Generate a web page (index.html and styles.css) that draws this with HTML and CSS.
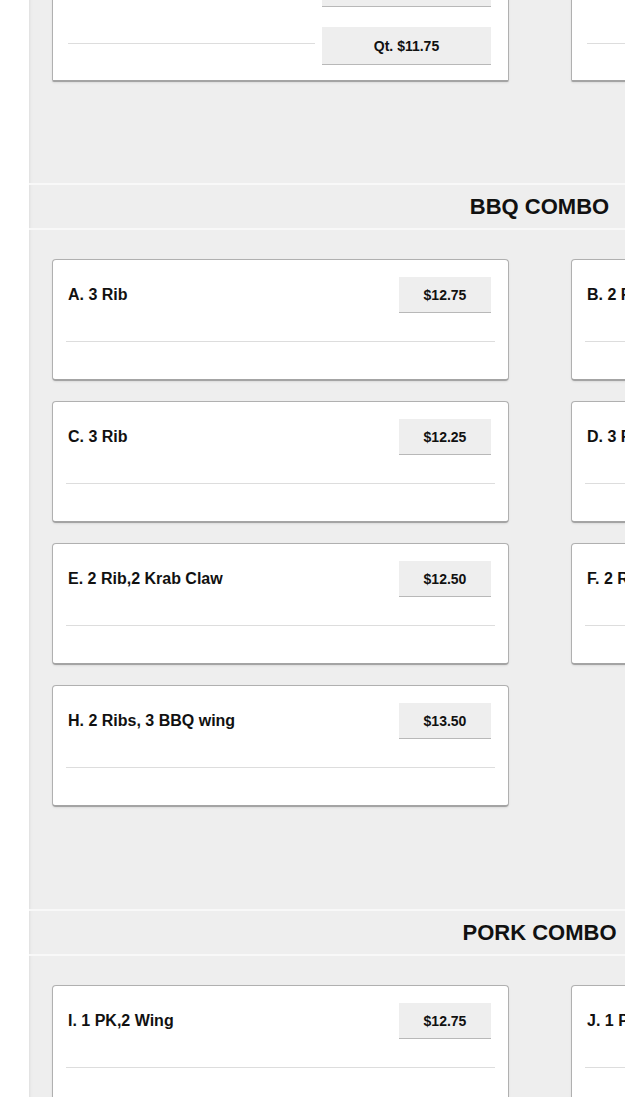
FILE: index.html
```html
<!DOCTYPE html>
<html>
<head>
<meta charset="utf-8">
<link rel="stylesheet" href="styles.css">
</head>
<body>
<div class="page">
  <div class="side"></div>
  <main class="main">
    <section class="section section-first">
      <div class="grid grid-top">
        <div class="card card-sizes">
          <div class="size-row"><span class="line"></span><span class="btn btn-wide">Pt. $6.50</span></div>
          <div class="size-row"><span class="line"></span><span class="btn btn-wide">Qt. $11.75</span></div>
        </div>
        <div class="card card-sizes">
          <div class="size-row"><span class="line"></span><span class="btn btn-wide">Pt. $6.50</span></div>
          <div class="size-row"><span class="line"></span><span class="btn btn-wide">Qt. $11.75</span></div>
        </div>
      </div>
    </section>

    <section class="section">
      <h2 class="section-title">BBQ COMBO</h2>
      <div class="grid">
        <div class="card"><div class="item-row"><span class="item-name">A. 3 Rib</span><span class="btn">$12.75</span></div><div class="divider"></div></div>
        <div class="card"><div class="item-row"><span class="item-name">B. 2 Rib, 2 Wing</span><span class="btn">$12.50</span></div><div class="divider"></div></div>
        <div class="card"><div class="item-row"><span class="item-name">C. 3 Rib</span><span class="btn">$12.25</span></div><div class="divider"></div></div>
        <div class="card"><div class="item-row"><span class="item-name">D. 3 Rib, 2 Wing</span><span class="btn">$13.75</span></div><div class="divider"></div></div>
        <div class="card"><div class="item-row"><span class="item-name">E. 2 Rib,2 Krab Claw</span><span class="btn">$12.50</span></div><div class="divider"></div></div>
        <div class="card"><div class="item-row"><span class="item-name">F. 2 Rib, 2 Fish</span><span class="btn">$12.75</span></div><div class="divider"></div></div>
        <div class="card"><div class="item-row"><span class="item-name">H. 2 Ribs, 3 BBQ wing</span><span class="btn">$13.50</span></div><div class="divider"></div></div>
      </div>
    </section>

    <section class="section">
      <h2 class="section-title">PORK COMBO</h2>
      <div class="grid">
        <div class="card"><div class="item-row"><span class="item-name">I. 1 PK,2 Wing</span><span class="btn">$12.75</span></div><div class="divider"></div></div>
        <div class="card"><div class="item-row"><span class="item-name">J. 1 PK, 1 Rib</span><span class="btn">$12.75</span></div><div class="divider"></div></div>
      </div>
    </section>
  </main>
</div>
</body>
</html>
```

FILE: styles.css
```css
html, body {
  margin: 0;
  padding: 0;
  background: #ffffff;
}

body {
  font-family: "Liberation Sans", Arial, sans-serif;
  color: #111111;
  overflow: hidden;
}

.page {
  display: flex;
  align-items: flex-start;
}

.side {
  width: 29px;
  flex: 0 0 29px;
}

.main {
  flex: 0 0 1021px;
  width: 1021px;
  background: #eeeeee;
  box-shadow: inset 4px 0 3px -3px #dedede;
  min-height: 1200px;
}

.section {
  padding-bottom: 102px;
}

.section-first {
  padding-bottom: 101px;
}

.section-title {
  margin: 0 0 29px 0;
  height: 43px;
  line-height: 43px;
  text-align: center;
  font-size: 22px;
  font-weight: bold;
  color: #111111;
  border-top: 2px solid #f8f8f8;
  border-bottom: 2px solid #f8f8f8;
}

.grid {
  display: grid;
  grid-template-columns: 457px 457px;
  column-gap: 62px;
  row-gap: 20px;
  padding: 0 22px 0 23px;
}

.grid-top {
  margin-top: -48px;
}

.card {
  box-sizing: border-box;
  background: #ffffff;
  border: 1px solid #b0b0b0;
  border-bottom: 2px solid #a4a4a4;
  border-radius: 4px;
  box-shadow: 0 1px 2px rgba(0, 0, 0, 0.08);
  height: 122px;
  padding: 17px 13px 0 13px;
}

.card-sizes {
  height: auto;
  padding: 16px 17px 15px 15px;
  border-radius: 0 0 2px 2px;
  display: flex;
  flex-direction: column;
  gap: 20px;
}

.size-row {
  display: flex;
  align-items: center;
  gap: 7px;
}

.line {
  flex: 1;
  border-top: 1px solid #dddddd;
  margin-bottom: 6px;
}

.item-row {
  display: flex;
  align-items: center;
  justify-content: space-between;
  height: 36px;
  padding: 0 4px 0 2px;
}

.item-name {
  font-size: 16px;
  font-weight: bold;
  color: #111111;
}

.btn {
  box-sizing: border-box;
  display: flex;
  align-items: center;
  justify-content: center;
  width: 92px;
  height: 36px;
  background: #eeeeee;
  border-bottom: 1px solid #b8b8b8;
  font-size: 14px;
  font-weight: bold;
  color: #111111;
}

.btn-wide {
  width: 169px;
  height: 38px;
}

.divider {
  margin-top: 28px;
  border-top: 1px solid #dddddd;
}
```
